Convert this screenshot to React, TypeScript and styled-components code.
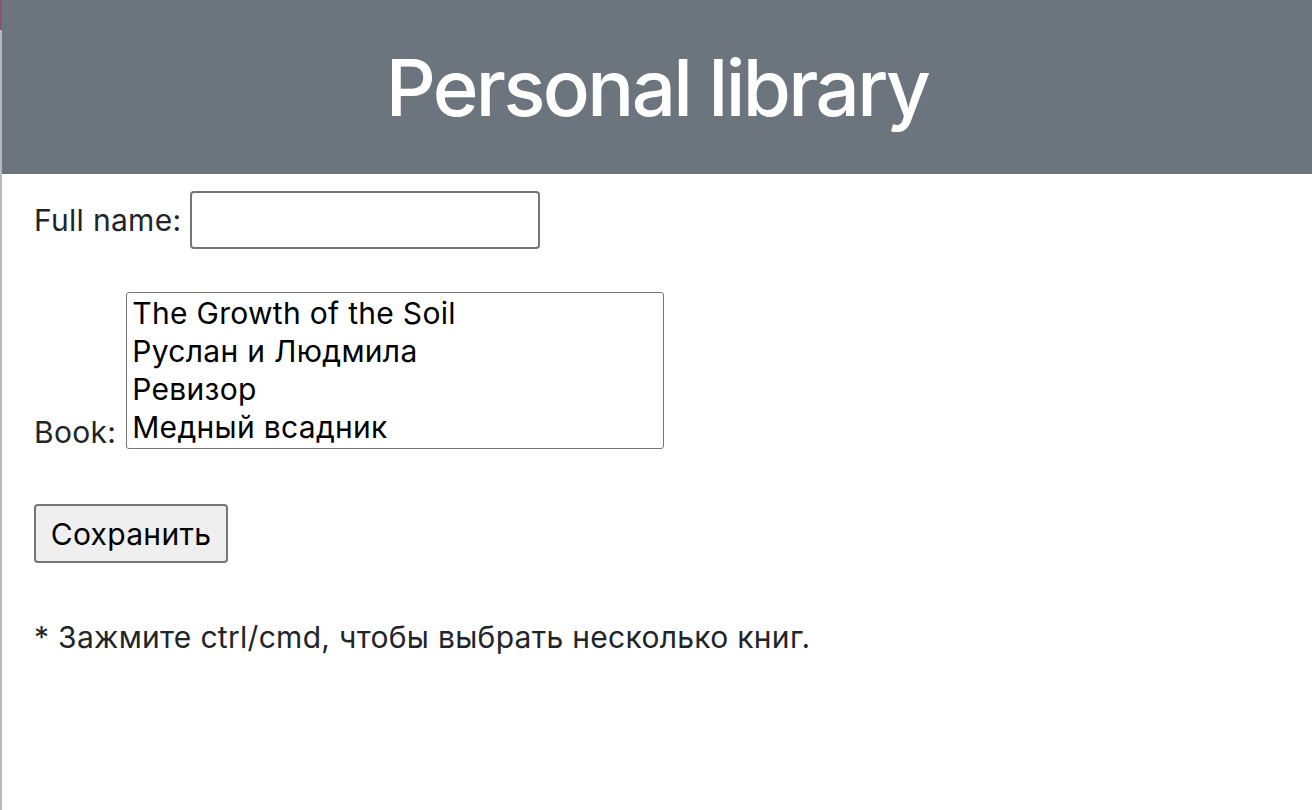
import React from "react";
import styled, { createGlobalStyle } from "styled-components";

const GlobalStyle = createGlobalStyle`
  html, body {
    margin: 0;
    padding: 0;
    background: #ffffff;
  }
  body {
    font-family: Inter, "Noto Sans", "Liberation Sans", sans-serif;
    color: #212529;
  }
  * { box-sizing: border-box; }
`;

const Page = styled.div`
  position: relative;
  min-height: 810px;
  border-left: 2px solid #b9b9bb;
  &::before {
    content: "";
    position: absolute;
    left: -2px;
    top: 0;
    width: 2px;
    height: 30px;
    background: #8c5565;
  }
`;

const Header = styled.header`
  height: 174px;
  background: #6c757d;
  display: flex;
  align-items: center;
  justify-content: center;
`;

const Title = styled.h1`
  margin: 0;
  color: #ffffff;
  font-size: 78px;
  font-weight: 500;
  letter-spacing: -2.6px;
  line-height: 1;
  padding-top: 2px;
`;

const Form = styled.form`
  padding: 0 32px;
  display: flex;
  flex-direction: column;
  align-items: flex-start;
`;

const Row = styled.div<{ $top: number }>`
  display: flex;
  align-items: flex-end;
  margin-top: ${(p) => p.$top}px;
`;

const RowCenter = styled(Row)`
  align-items: center;
`;

const Label = styled.label<{ $gap: number; $drop?: number }>`
  font-size: 30px;
  line-height: 38px;
  margin-right: ${(p) => p.$gap}px;
  margin-bottom: ${(p) => p.$drop ?? 0}px;
  letter-spacing: 0.3px;
`;

const TextInput = styled.input`
  width: 350px;
  height: 58px;
  border: 2px solid #767676;
  border-radius: 4px;
  background: #ffffff;
  font-size: 30px;
  padding: 0 6px;
  font-family: inherit;
`;

const ListBox = styled.div`
  width: 538px;
  height: 157px;
  border: 1.5px solid #767676;
  border-radius: 3px;
  padding: 1px 5px;
  background: #ffffff;
  overflow: hidden;
`;

const Option = styled.div`
  font-size: 30px;
  line-height: 38px;
  color: #000000;
  letter-spacing: 0.3px;
  white-space: nowrap;
`;

const SaveButton = styled.button`
  margin-top: 55px;
  width: 194px;
  height: 59px;
  background: #efefef;
  border: 2px solid #767676;
  border-radius: 4px;
  font-family: inherit;
  font-size: 30px;
  color: #000000;
  padding: 0;
  letter-spacing: 0.3px;
`;

const Note = styled.p`
  margin: 55px 0 0;
  font-size: 30px;
  line-height: 38px;
  letter-spacing: 0.3px;
`;

const books = [
  "The Growth of the Soil",
  "Руслан и Людмила",
  "Ревизор",
  "Медный всадник",
];

export default function App() {
  return (
    <>
      <GlobalStyle />
      <Page>
        <Header>
          <Title>Personal library</Title>
        </Header>
        <Form onSubmit={(e) => e.preventDefault()}>
          <RowCenter $top={17}>
            <Label $gap={9} htmlFor="fullname">Full name:</Label>
            <TextInput id="fullname" type="text" />
          </RowCenter>
          <Row $top={43}>
            <Label $gap={10} $drop={-2}>Book:</Label>
            <ListBox role="listbox" aria-multiselectable="true">
              {books.map((b) => (
                <Option role="option" key={b}>
                  {b}
                </Option>
              ))}
            </ListBox>
          </Row>
          <SaveButton type="submit">Сохранить</SaveButton>
          <Note>* Зажмите ctrl/cmd, чтобы выбрать несколько книг.</Note>
        </Form>
      </Page>
    </>
  );
}
